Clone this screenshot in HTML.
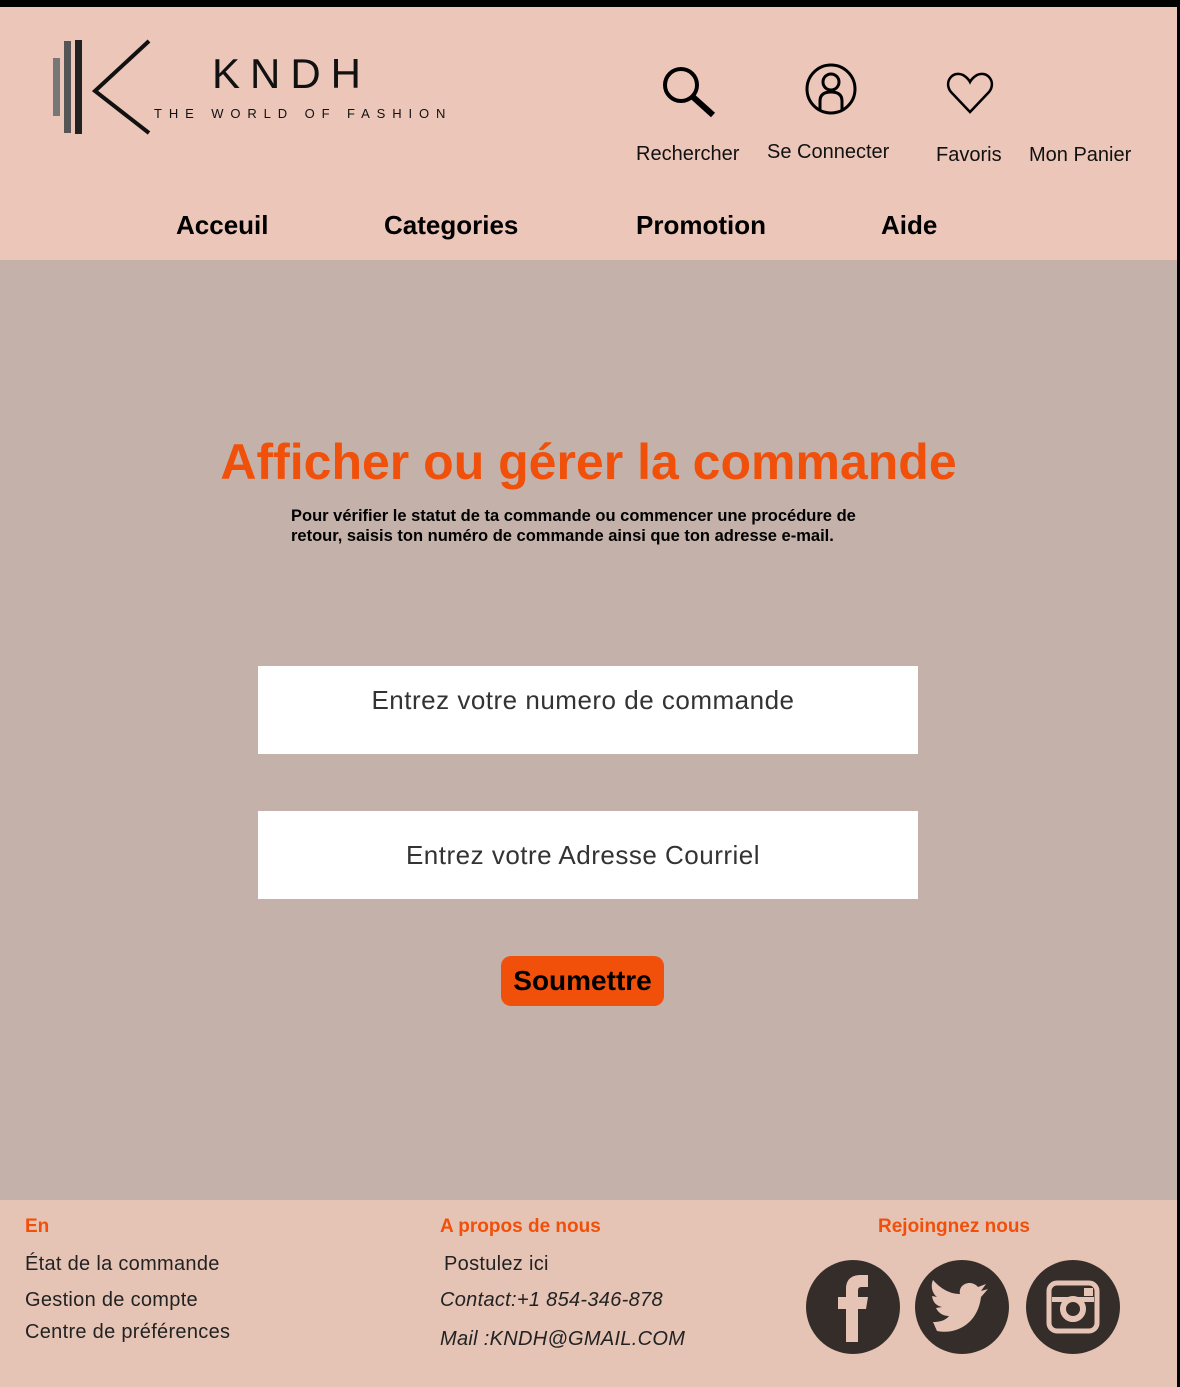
<!DOCTYPE html>
<html><head><meta charset="utf-8"><style>
*{margin:0;padding:0;box-sizing:border-box}
body{width:1180px;height:1387px;position:relative;background:#000;font-family:"Liberation Sans",sans-serif;overflow:hidden}
.hdr{position:absolute;left:0;top:7px;width:1177px;height:253px;background:#ecc6b9}
.main{position:absolute;left:0;top:260px;width:1177px;height:940px;background:#c4b2aa}
.ftr{position:absolute;left:0;top:1200px;width:1177px;height:187px;background:#e6c4b5}
.t{position:absolute;white-space:nowrap}
.nav{font-weight:bold;font-size:26px;top:210px}
.lbl{font-size:20px;color:#111}
.inp{position:absolute;left:258px;width:660px;height:88px;background:#fff;font-size:26px;letter-spacing:0.5px;color:#333;text-align:center}
.fl{font-size:20px;color:#222;letter-spacing:0.3px}
.fo{font-size:19px;color:#f0500a;font-weight:bold}
</style></head><body>
<div class="hdr"></div><div class="main"></div><div class="ftr"></div>
<svg class="t" style="left:50px;top:38px" width="110" height="98">
<rect x="3" y="20" width="7" height="58" fill="#777"/>
<rect x="14" y="3" width="7" height="92" fill="#555"/>
<rect x="25" y="2" width="7" height="94" fill="#222"/>
<polyline points="99,3 45,53 99,95" fill="none" stroke="#111" stroke-width="4"/>
</svg>
<div class="t" style="left:212px;top:50px;font-size:42px;letter-spacing:10px;color:#111">KNDH</div>
<div class="t" style="left:154px;top:106px;font-size:13px;letter-spacing:6.9px;color:#111">THE WORLD OF FASHION</div>
<svg class="t" style="left:660px;top:64px" width="60" height="56"><circle cx="21" cy="21" r="16" fill="none" stroke="#000" stroke-width="4"/><line x1="33" y1="33" x2="53" y2="51" stroke="#000" stroke-width="6"/></svg>
<svg class="t" style="left:803px;top:61px" width="56" height="56"><circle cx="28" cy="28" r="24" fill="none" stroke="#000" stroke-width="3"/><circle cx="28" cy="21" r="8" fill="none" stroke="#000" stroke-width="3"/><path d="M17 50 V40 Q17 31 28 31 Q39 31 39 40 V50" fill="none" stroke="#000" stroke-width="3"/></svg>
<svg class="t" style="left:945px;top:70px" width="50" height="46"><path d="M25 42 L6 22 C-2 12 8 0 18 5 Q23 8 25 12 Q27 8 32 5 C42 0 52 12 44 22 Z" fill="none" stroke="#000" stroke-width="2.5"/></svg>
<div class="t lbl" style="left:636px;top:143px">Rechercher</div>
<div class="t lbl" style="left:767px;top:141px">Se Connecter</div>
<div class="t lbl" style="left:936px;top:144px">Favoris</div>
<div class="t lbl" style="left:1029px;top:144px">Mon Panier</div>
<div class="t nav" style="left:176px">Acceuil</div>
<div class="t nav" style="left:384px">Categories</div>
<div class="t nav" style="left:636px">Promotion</div>
<div class="t nav" style="left:881px">Aide</div>
<div class="t" style="left:0;width:1177px;text-align:center;top:433px;font-size:50px;font-weight:bold;color:#f0500a">Afficher ou gérer la commande</div>
<div class="t" style="left:291px;top:506px;font-size:16.5px;font-weight:bold;line-height:20px;color:#000">Pour vérifier le statut de ta commande ou commencer une procédure de<br>retour, saisis ton numéro de commande ainsi que ton adresse e-mail.</div>
<div class="inp" style="top:666px;padding-top:19px;padding-right:10px">Entrez votre numero de commande</div>
<div class="inp" style="top:811px;padding-top:29px;padding-right:10px">Entrez votre Adresse Courriel</div>
<div class="t" style="left:501px;top:956px;width:163px;height:50px;background:#f0500a;border-radius:10px;font-size:28px;font-weight:bold;text-align:center;line-height:50px;color:#000">Soumettre</div>
<div class="t fo" style="left:25px;top:1216px">En</div>
<div class="t fl" style="left:25px;top:1253px">État de la commande</div>
<div class="t fl" style="left:25px;top:1289px">Gestion de compte</div>
<div class="t fl" style="left:25px;top:1321px">Centre de préférences</div>
<div class="t fo" style="left:440px;top:1216px">A propos de nous</div>
<div class="t fl" style="left:444px;top:1253px">Postulez ici</div>
<div class="t fl" style="left:440px;top:1289px;font-style:italic">Contact:+1 854-346-878</div>
<div class="t fl" style="left:440px;top:1328px;font-style:italic">Mail :KNDH@GMAIL.COM</div>
<div class="t fo" style="left:878px;top:1216px">Rejoingnez nous</div>
<svg class="t" style="left:805px;top:1259px" width="320" height="98">
<circle cx="48" cy="48" r="47" fill="#352d2a"/>
<path d="M41 83 V50 H33 V38 H41 V30 C41 20 47 16 56 16 H63 V28 H57 C54 28 53 29 53 32 V38 H63 L61 50 H53 V83 Z" fill="#e6c4b5"/>
<circle cx="157" cy="48" r="47" fill="#352d2a"/>
<path d="M132 72 C152 76 173 64 176 38 L183 30 L176 32 L181 25 L173 28 C166 20 153 25 155 35 C144 35 135 29 128 21 C125 28 128 35 132 38 L127 37 C128 44 132 47 137 48 L131 49 C134 55 139 57 144 57 C140 62 134 63 128 63 Z" fill="#e6c4b5"/>
<circle cx="268" cy="48" r="47" fill="#352d2a"/>
<rect x="244" y="24" width="48" height="48" rx="8" fill="none" stroke="#e6c4b5" stroke-width="5"/>
<rect x="247" y="38" width="42" height="5" fill="#e6c4b5"/>
<circle cx="268" cy="50" r="10" fill="#352d2a" stroke="#e6c4b5" stroke-width="6"/>
<rect x="279" y="29" width="9" height="8" fill="#e6c4b5"/>
</svg>
</body></html>
